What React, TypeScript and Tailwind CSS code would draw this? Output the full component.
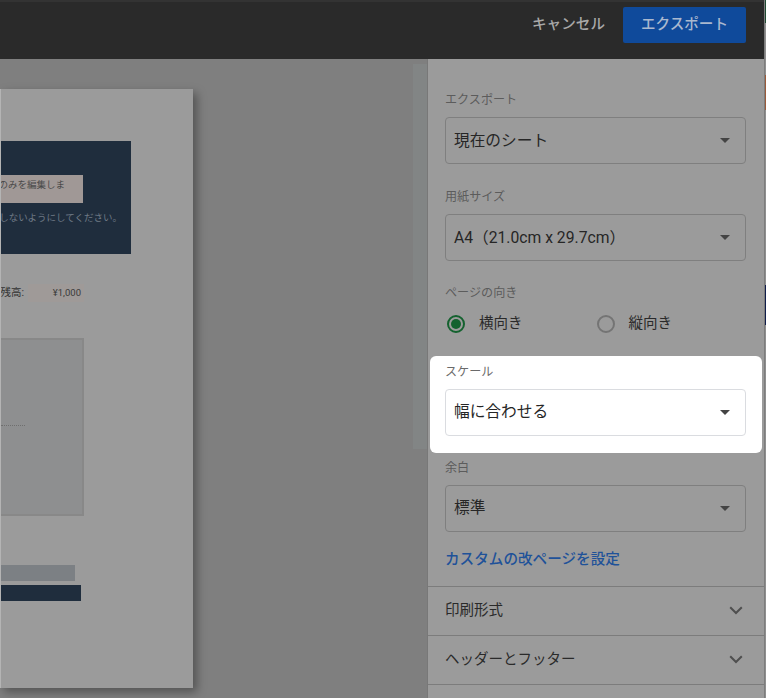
const font = "[font-family:Roboto,'Noto_Sans_CJK_JP',sans-serif]";

function Caret() {
  return <span className="w-0 h-0 border-x-[5px] border-x-transparent border-t-[5px] border-t-[#444]" />;
}

function SelectBox({ value, white = false }: { value: string; white?: boolean }) {
  return (
    <div
      className={`h-[47px] flex items-center justify-between pl-[8px] pr-[15px] rounded-[4px] border text-[15.7px] text-[#262626] ${
        white ? "bg-white border-[#dadce0]" : "border-[#7f7f7f]"
      }`}
    >
      <span>{value}</span>
      <Caret />
    </div>
  );
}

function Field({ label, value, className = "" }: { label: string; value: string; className?: string }) {
  return (
    <div className={className}>
      <div className="text-[12.1px] leading-[16px] text-[#5c5c5c] mb-[9px]">{label}</div>
      <SelectBox value={value} />
    </div>
  );
}

function Radio({ label, on = false }: { label: string; on?: boolean }) {
  return (
    <div className="flex items-center gap-[14px] w-[151px]">
      <span
        className={`w-[18px] h-[18px] rounded-full border-2 flex items-center justify-center ${
          on ? "border-[#14622f]" : "border-[#747474]"
        }`}
      >
        {on && <span className="w-[10px] h-[10px] rounded-full bg-[#14622f]" />}
      </span>
      <span className="text-[14.5px] text-[#2a2a2a]">{label}</span>
    </div>
  );
}

function Section({ label }: { label: string }) {
  return (
    <div className="h-[49px] flex items-center justify-between pl-[17px] pr-[21px] border-t border-[#7c7c7c] text-[14.5px] text-[#2a2a2a]">
      <span>{label}</span>
      <svg width="14" height="9" viewBox="0 0 14 9" fill="none">
        <path d="M1.2 1.2 7 7l5.8-5.8" stroke="#4f4f4f" strokeWidth="2" />
      </svg>
    </div>
  );
}

// sliver of the sheet behind the dialog
function SheetEdge() {
  return (
    <div className="w-[2px] shrink-0 flex flex-col bg-[#8f8f8f] border-l border-[#7d7d7d]">
      <div className="h-[23px] bg-[#1f4a32]" />
      <div className="h-[52px]" />
      <div className="h-[35px] bg-[#9a5a3a]" />
      <div className="h-[175px]" />
      <div className="h-[40px] bg-[#101d4a]" />
    </div>
  );
}

function PagePreview() {
  return (
    <div className="w-[193px] h-[599px] shrink-0 bg-[#9b9b9b] border-l border-[#b4b4b4] shadow-[4px_4px_9px_rgba(0,0,0,0.35)] flex flex-col">
      {/* dark notice band */}
      <div className="w-[130px] h-[113px] mt-[52px] shrink-0 bg-[#1f2d3d] pt-[34px] text-[9.5px]">
        <div className="w-[82px] h-[28px] bg-[#a09896] text-[#4a4a4a] pr-[18px] leading-[19px] whitespace-nowrap overflow-hidden flex justify-end">
          のみを編集しま
        </div>
        <div className="mt-[8px] pr-[9px] text-[#6f7a86] whitespace-nowrap flex justify-end">
          しないようにしてください。
        </div>
      </div>
      {/* balance */}
      <div className="w-[83px] h-[18px] mt-[30px] flex items-center whitespace-nowrap">
        <span className="w-[23px] text-[10.5px] text-[#333] flex justify-end overflow-hidden">残高:</span>
        <span className="ml-[4px] w-[56px] h-[18px] bg-[#9f9a98] text-[9.5px] leading-[18px] text-[#3a3a3a] text-right pr-[3px]">
          ¥1,000
        </span>
      </div>
      {/* chart box */}
      <div className="w-[83px] h-[178px] mt-[36px] bg-[#8e8f90] border-2 border-l-0 border-[#888] flex flex-col justify-center">
        <div className="w-[24px] mt-[-4px] border-t border-dotted border-[#6f6f6f]" />
      </div>
      <div className="w-[74px] h-[16px] mt-[49px] bg-[#7c8084]" />
      <div className="w-[80px] h-[16px] mt-[4px] bg-[#1f2d3d]" />
    </div>
  );
}

export default function App() {
  return (
    <div className={`w-[766px] h-[698px] overflow-hidden flex ${font}`}>
      <div className="w-[764px] shrink-0 flex flex-col bg-[#7f7f7f]">
        {/* top bar */}
        <div className="h-[59px] shrink-0 bg-[#2a2a2a] border-t-2 border-[#333] flex items-center justify-end pr-[18px] pb-[11px]">
          <span className="text-[14.6px] font-medium text-[#a8a8a8] mr-[18px]">キャンセル</span>
          <button className="w-[123px] h-[36px] rounded-[2px] bg-[#0f4a9b] text-[14.6px] font-medium text-[#a9b8cf]">
            エクスポート
          </button>
        </div>

        <div className="flex-1 flex min-h-0">
          {/* preview */}
          <div className="flex-1 flex min-w-0">
            <div className="pt-[30px]">
              <PagePreview />
            </div>
            <div className="flex-1" />
            <div className="w-[14px] h-[385px] mt-[5px] bg-[#828585]" />
          </div>

          {/* options panel */}
          <div className="w-[337px] shrink-0 bg-[#9b9b9b] border-l border-[#787878] flex flex-col">
            <div className="pl-[17px] pr-[18px] pt-[33px]">
              <Field label="エクスポート" value="現在のシート" />
              <Field label="用紙サイズ" value="A4（21.0cm x 29.7cm）" className="mt-[25px]" />
              <div className="mt-[24px]">
                <div className="text-[12.1px] leading-[16px] text-[#5c5c5c]">ページの向き</div>
                <div className="flex mt-[12px] pl-[2px]">
                  <Radio label="横向き" on />
                  <Radio label="縦向き" />
                </div>
              </div>
              <div className="mt-[21px] -ml-[15px] -mr-[16px] pl-[15px] pr-[16px] pt-[8px] pb-[17px] rounded-[6px] bg-white">
                <div className="text-[12.1px] leading-[16px] text-[#6a6a6a] mb-[9px]">スケール</div>
                <SelectBox value="幅に合わせる" white />
              </div>
              <Field label="余白" value="標準" className="mt-[7px]" />
              <div className="mt-[17px] mb-[15px] text-[14.6px] font-medium text-[#1f5299]">カスタムの改ページを設定</div>
            </div>
            <Section label="印刷形式" />
            <Section label="ヘッダーとフッター" />
            <div className="border-t border-[#7c7c7c]" />
          </div>
        </div>
      </div>
      <SheetEdge />
    </div>
  );
}
